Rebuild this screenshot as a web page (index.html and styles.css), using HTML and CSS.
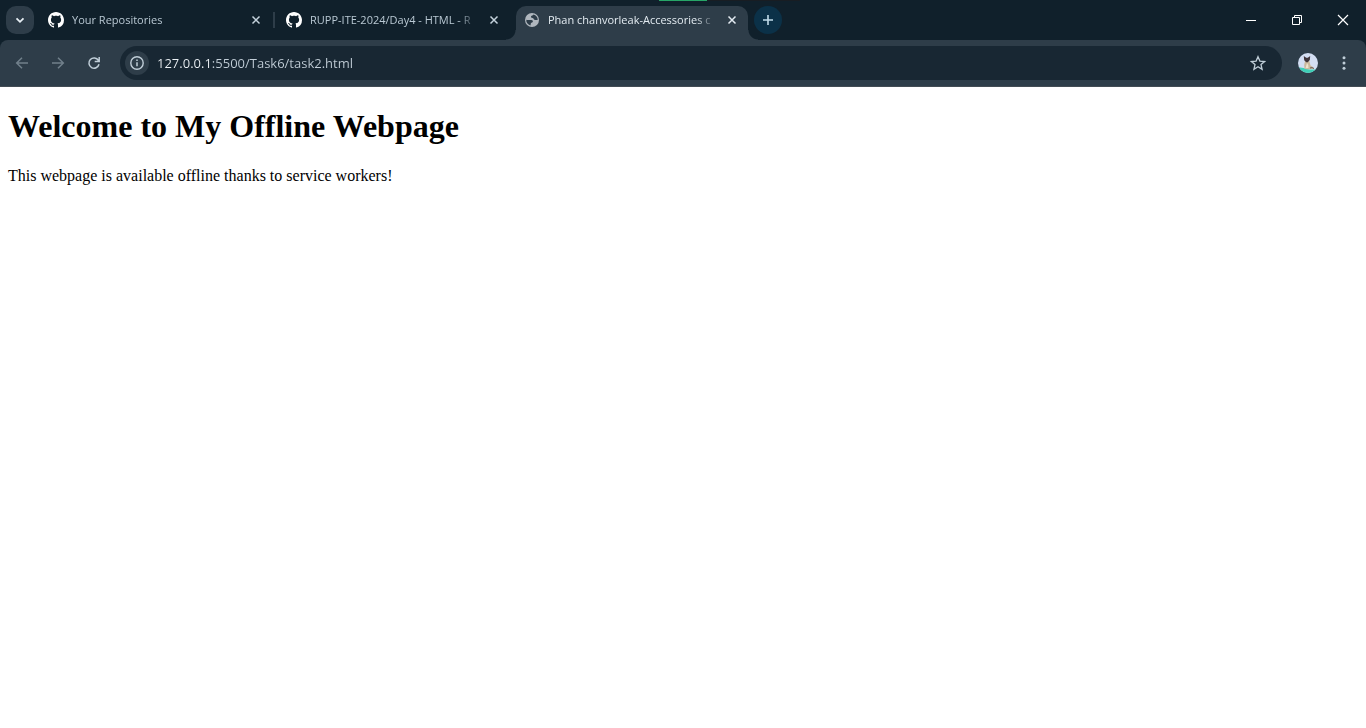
FILE: index.html
```html
<!DOCTYPE html>
<html lang="en">
<head>
<meta charset="utf-8">
<title>Phan chanvorleak-Accessories</title>
<link rel="stylesheet" href="styles.css">
</head>
<body>
<svg width="0" height="0" class="defs" aria-hidden="true">
  <symbol id="github" viewBox="0 0 16 16"><path d="M8 0C3.58 0 0 3.58 0 8c0 3.54 2.29 6.53 5.47 7.59.4.07.55-.17.55-.38 0-.19-.01-.82-.01-1.49-2.01.37-2.53-.49-2.69-.94-.09-.23-.48-.94-.82-1.13-.28-.15-.68-.52-.01-.53.63-.01 1.08.58 1.23.82.72 1.21 1.87.87 2.33.66.07-.52.28-.87.51-1.07-1.78-.2-3.64-.89-3.64-3.95 0-.87.31-1.59.82-2.15-.08-.2-.36-1.02.08-2.12 0 0 .67-.21 2.2.82.64-.18 1.32-.27 2-.27s1.36.09 2 .27c1.53-1.04 2.2-.82 2.2-.82.44 1.1.16 1.92.08 2.12.51.56.82 1.27.82 2.15 0 3.07-1.87 3.75-3.65 3.95.29.25.54.73.54 1.48 0 1.07-.01 1.93-.01 2.2 0 .21.15.46.55.38A8.01 8.01 0 0 0 16 8c0-4.42-3.58-8-8-8z" fill="#fff"/></symbol>
  <symbol id="close" viewBox="0 0 16 16"><path d="M4.500 4.500l7 7M11.500 4.500l-7 7" fill="none" stroke="currentColor" stroke-width="1.500"/></symbol>
</svg>
<header class="browser">
  <div class="tabstrip">
    <button class="tab-search" aria-label="Search tabs"><svg width="16" height="16" viewBox="0 0 16 16"><path d="M4.500 6.300L8 9.800l3.500-3.500" fill="none" stroke="#e8f0f5" stroke-width="1.800"/></svg></button>
    <div class="tabs">
      <div class="tab divided"><svg class="icon" aria-hidden="true"><use href="#github"/></svg><span class="title">Your Repositories</span><button class="close" aria-label="Close tab"><svg class="icon"><use href="#close"/></svg></button></div>
      <div class="tab"><svg class="icon" aria-hidden="true"><use href="#github"/></svg><span class="title">RUPP-ITE-2024/Day4 - HTML - R</span><button class="close" aria-label="Close tab"><svg class="icon"><use href="#close"/></svg></button></div>
      <div class="tab active"><svg class="icon" viewBox="0 0 16 16" aria-hidden="true"><circle cx="8" cy="8" r="7" fill="#b0b7be"/><path d="M2.300 7.800C4 8.400 5.500 7.800 7.200 8c1.600.2 2.200 1.400 1.300 2.200-.6.500-1.500.4-1.700 1.200-.2.800 0 1.300-.4 2C3.800 12.800 2 10.500 2.300 7.800zM9.500 2.600c-.3 1-1.900.9-2.400 1.700-.5.900.3 1.700 1.400 1.700 1.200 0 1 1.200 1.900 1.700 1 .5 2.100-.1 3.300.4.200-2.700-1.700-5-4.200-5.500z" fill="#2e3d49"/></svg><span class="title">Phan chanvorleak-Accessories c</span><button class="close" aria-label="Close tab"><svg class="icon"><use href="#close"/></svg></button></div>
    </div>
    <button class="new-tab" aria-label="New tab"><svg width="16" height="16" viewBox="0 0 16 16"><path d="M8 3v10M3 8h10" stroke="#c0dbe9" stroke-width="1.600"/></svg></button>
    <div class="window-controls">
      <button aria-label="Minimize"><svg width="12" height="12" viewBox="0 0 12 12"><path d="M1 6.500h10" stroke="#fff"/></svg></button>
      <button aria-label="Restore"><svg width="12" height="12" viewBox="0 0 12 12"><path d="M1.500 3.500h7v7h-7zM3.500 3.500v-2h7v7h-2" fill="none" stroke="#fff"/></svg></button>
      <button aria-label="Close"><svg width="12" height="12" viewBox="0 0 12 12"><path d="M1 1l10 10M11 1L1 11" stroke="#fff" stroke-width="1.200"/></svg></button>
    </div>
    <div class="screen-edge"></div>
  </div>
  <div class="toolbar">
    <button class="dim" aria-label="Back"><svg class="icon" viewBox="0 0 16 16"><path d="M14 8H3M8 2.700L2.700 8 8 13.300" fill="none" stroke="currentColor" stroke-width="1.500"/></svg></button>
    <button class="dim" aria-label="Forward"><svg class="icon" viewBox="0 0 16 16"><path d="M2 8h11M8 2.700L13.300 8 8 13.300" fill="none" stroke="currentColor" stroke-width="1.500"/></svg></button>
    <button aria-label="Reload"><svg class="icon" viewBox="0 0 16 16"><path d="M13 9.300A5.100 5.100 0 1 1 12.400 5.400M13.200 2v4.500H8.700" fill="none" stroke="currentColor" stroke-width="1.500"/></svg></button>
    <div class="omnibox">
      <button class="info" aria-label="View site information"><svg class="icon" viewBox="0 0 16 16"><circle cx="8" cy="8" r="6.200" fill="none" stroke="currentColor" stroke-width="1.400"/><path d="M8 7.200v4M8 4.500v1.500" stroke="currentColor" stroke-width="1.500"/></svg></button>
      <input class="url" type="text" aria-label="Address" value="127.0.0.1:5500/Task6/task2.html">
      <button aria-label="Bookmark this page"><svg class="icon" viewBox="0 0 16 16"><path d="M8 1.700l1.900 4.400 4.700.4-3.600 3.100 1.100 4.700L8 11.800l-4.100 2.500L5 9.600 1.400 6.500l4.700-.4z" fill="none" stroke="currentColor" stroke-width="1.300"/></svg></button>
    </div>
    <button aria-label="Profile"><svg width="20" height="20" viewBox="0 0 20 20"><clipPath id="round"><circle cx="10" cy="10" r="10"/></clipPath><g clip-path="url(#round)"><path d="M0 0h20v20H0z" fill="#d3def3"/><path d="M0 14.500q5-.5 9 1.500 5 1 11 0v5H0z" fill="#3fcfb7"/><path d="M7 8q3-1.500 4.500.5l1 4q2.500 1 3.500 3-5 1.500-9.500.2-.8-4 .5-7.700z" fill="#c9b89d"/><path d="M9 10q2 2 1.500 5l-3 .3z" fill="#eee2cc"/><path d="M5.800 3l2.400 1.800h1.600L12.200 3l-.4 4.100L9.700 9.200H8.300L6.200 7.200z" fill="#3f343a"/><path d="M12 15q2-1 4 .5" stroke="#675552" fill="none"/></g></svg></button>
    <button aria-label="Menu"><svg class="icon" viewBox="0 0 16 16" fill="currentColor"><circle cx="8" cy="2.700" r="1.500"/><circle cx="8" cy="8" r="1.500"/><circle cx="8" cy="13.300" r="1.500"/></svg></button>
  </div>
</header>
<main class="page">
  <h1>Welcome to My Offline Webpage</h1>
  <p>This webpage is available offline thanks to service workers!</p>
</main>
</body>
</html>
```
FILE: styles.css
```css
* { box-sizing: border-box; }
body { margin: 0; background: #fff; }
button { display: flex; align-items: center; justify-content: center; flex: none; border: 0; padding: 0; background: none; color: #c0ced8; }
svg { display: block; }
.defs { position: absolute; }
.icon { width: 16px; height: 16px; flex: none; }
.browser { background: #10202b; font-family: "Open Sans", "Noto Sans", sans-serif; }
.tabstrip { position: relative; display: flex; align-items: flex-start; height: 40px; padding: 6px 0 0 6px; }
.tab-search { width: 28px; height: 28px; border-radius: 10px; background: #2e3d49; }
.tabs { display: flex; gap: 6px; height: 34px; margin-left: 6px; }
.tab { position: relative; display: flex; width: 232px; height: 28px; padding: 0 8px; align-items: center; color: #b9c8d3; font-size: 11px; }
.title { flex: 1; margin: 0 8px; white-space: nowrap; line-height: 20px; mask-image: linear-gradient(to right, #000 calc(100% - 20px), transparent); }
.close { color: #c5d2dc; }
.divided::after { content: ""; position: absolute; right: -3px; top: 6px; width: 2px; height: 16px; background: #2e3d49; }
.active { height: 34px; padding-bottom: 6px; border-radius: 10px 10px 0 0; background: #2e3d49; color: #e3ebf1; }
.active .close { color: #e3ebf1; }
.active::before, .active::after { content: ""; position: absolute; bottom: 0; width: 10px; height: 10px; }
.active::before { right: 100%; background: radial-gradient(circle at 0 0, transparent 9px, #2e3d49 10px); }
.active::after { left: 100%; background: radial-gradient(circle at 100% 0, transparent 9px, #2e3d49 10px); }
.new-tab { width: 28px; height: 28px; margin-left: 6px; border-radius: 50%; background: #0b3148; }
.window-controls { display: flex; margin-left: auto; }
.window-controls button { width: 46px; height: 28px; }
.screen-edge { position: absolute; top: 0; left: 659px; width: 141px; height: 1px; background: linear-gradient(to right, #27a567 48px, #181d23 48px); }
.toolbar { display: flex; align-items: center; gap: 8px; height: 47px; padding: 0 8px; border-bottom: 1px solid #434c54; border-radius: 8px 8px 0 0; background: #2e3d49; }
.toolbar button { width: 28px; height: 28px; }
.toolbar .dim { color: #71808b; }
.omnibox { display: flex; flex: 1; align-items: center; height: 34px; margin: 0 4px; padding: 0 10px 0 5px; border-radius: 17px; background: #182733; }
.toolbar .info { width: 24px; height: 24px; border-radius: 50%; background: #2e3d49; }
.url { flex: 1; min-width: 0; margin: 0 8px; padding: 0; border: 0; outline: 0; font: 13px/20px "Open Sans", "Noto Sans", sans-serif; color: transparent; background: linear-gradient(to right, #eef3f7 55px, #c2ced8 55px); background-clip: text; -webkit-background-clip: text; }
.page { display: flow-root; padding: 0 8px; font-family: "Liberation Serif", serif; color: #000; }
```
